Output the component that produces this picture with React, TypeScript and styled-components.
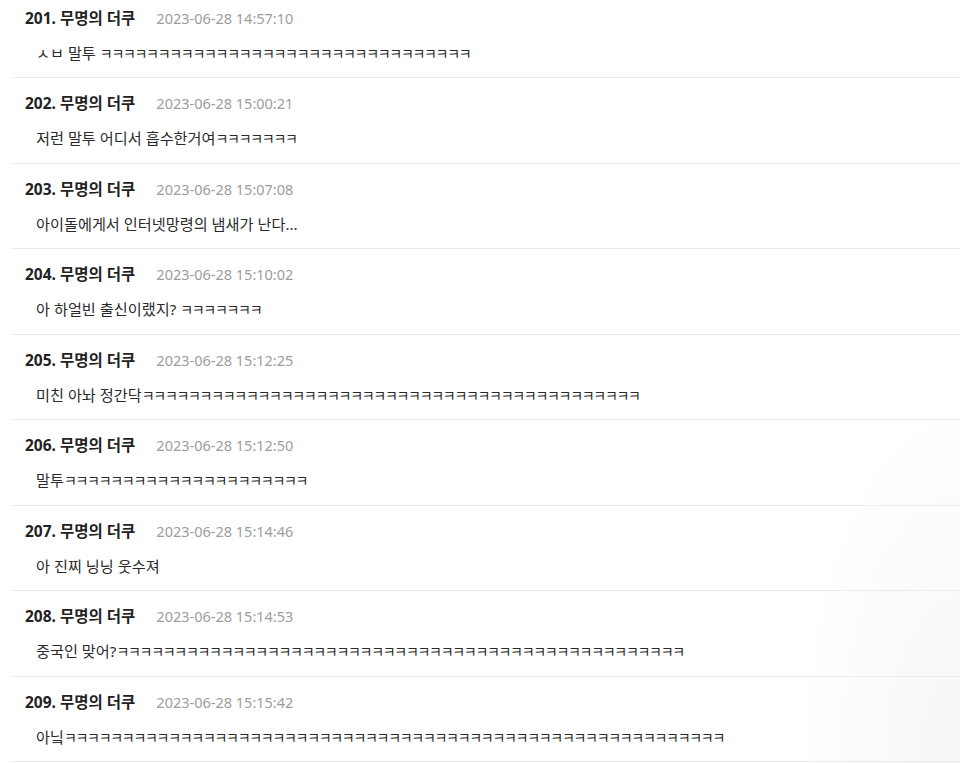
import React from 'react';
import styled, { createGlobalStyle } from 'styled-components';

const GlobalStyle = createGlobalStyle`
  html, body {
    margin: 0;
    padding: 0;
    background: #ffffff;
  }
  body {
    font-family: "Noto Sans", "Noto Sans CJK KR", sans-serif;
    -webkit-font-smoothing: antialiased;
  }
`;

interface Comment {
  no: number;
  name: string;
  date: string;
  text: string;
}

const k = (n: number) => 'ㅋ'.repeat(n);

const comments: Comment[] = [
  { no: 201, name: '무명의 더쿠', date: '2023-06-28 14:57:10', text: `ㅅㅂ 말투 ${k(32)}` },
  { no: 202, name: '무명의 더쿠', date: '2023-06-28 15:00:21', text: `저런 말투 어디서 흡수한거여${k(7)}` },
  { no: 203, name: '무명의 더쿠', date: '2023-06-28 15:07:08', text: '아이돌에게서 인터넷망령의 냄새가 난다...' },
  { no: 204, name: '무명의 더쿠', date: '2023-06-28 15:10:02', text: `아 하얼빈 출신이랬지? ${k(7)}` },
  { no: 205, name: '무명의 더쿠', date: '2023-06-28 15:12:25', text: `미친 아놔 정간닥${k(43)}` },
  { no: 206, name: '무명의 더쿠', date: '2023-06-28 15:12:50', text: `말투${k(21)}` },
  { no: 207, name: '무명의 더쿠', date: '2023-06-28 15:14:46', text: '아 진찌 닝닝 웃수져' },
  { no: 208, name: '무명의 더쿠', date: '2023-06-28 15:14:53', text: `중국인 맞어?${k(49)}` },
  { no: 209, name: '무명의 더쿠', date: '2023-06-28 15:15:42', text: `아닠${k(57)}` },
];

const Page = styled.div`
  width: 960px;
  height: 763px;
  overflow: hidden;
  padding-left: 12px;
  box-sizing: border-box;
  background: radial-gradient(ellipse 160px 360px at 100% 100%, #f6f6f6 0%, #ffffff 100%);
`;

const CommentItem = styled.div`
  padding: 15px 0 14.5px 13px;
  border-bottom: 1px solid #ececec;

  &:first-child {
    padding-top: 7.5px;
  }
`;

const Header = styled.div`
  display: flex;
  align-items: baseline;
  height: 20px;
  line-height: 20px;
`;

const Author = styled.span`
  font-size: 15.5px;
  font-weight: 700;
  color: #222222;
`;

const DateText = styled.span`
  margin-left: 21px;
  font-size: 14.5px;
  color: #9d9d9d;
`;

const Body = styled.div`
  margin-top: 15px;
  padding-left: 11px;
  height: 20px;
  line-height: 20px;
  font-size: 15.2px;
  color: #2a2a2a;
  white-space: nowrap;
`;

// jamo in the original font are smaller and tighter than in Noto CJK
const Laugh = styled.span`
  font-size: 14px;
  letter-spacing: -1.3px;
`;

const renderText = (text: string) =>
  text.split(/(ㅋ+)/).map((part, i) =>
    part.startsWith('ㅋ') ? <Laugh key={i}>{part}</Laugh> : <React.Fragment key={i}>{part}</React.Fragment>
  );

export default function App() {
  return (
    <>
      <GlobalStyle />
      <Page>
        {comments.map(c => (
          <CommentItem key={c.no}>
            <Header>
              <Author>{c.no}. {c.name}</Author>
              <DateText>{c.date}</DateText>
            </Header>
            <Body>{renderText(c.text)}</Body>
          </CommentItem>
        ))}
      </Page>
    </>
  );
}
